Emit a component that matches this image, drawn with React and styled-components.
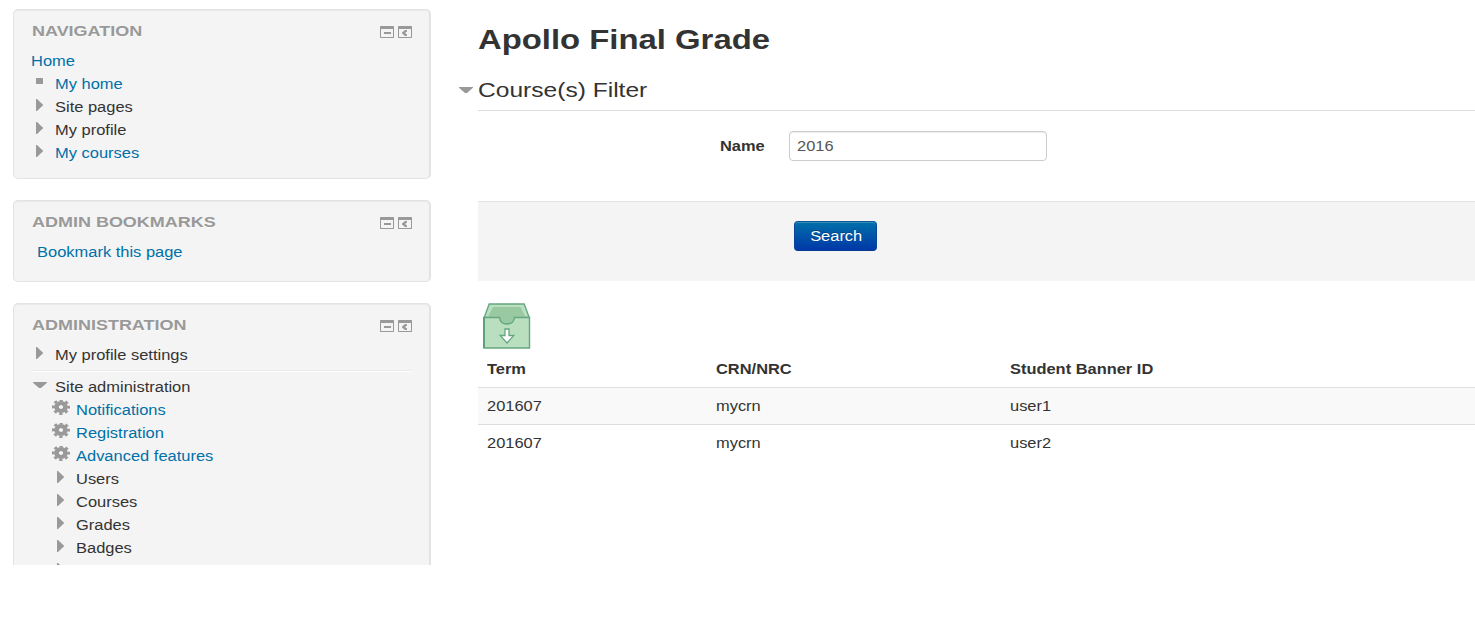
import React from "react";
import styled, { createGlobalStyle } from "styled-components";

const Global = createGlobalStyle`
  * { box-sizing: border-box; }
  body {
    margin: 0;
    background: #fff;
    color: #333;
    font: 14px/20px "Liberation Sans", Arial, sans-serif;
  }
`;

const Page = styled.div`
  display: flex;
  align-items: flex-start;
  width: 100%;
  height: 565px;
  overflow: hidden;
`;

/* Wide lettering used through the whole page */
const Wide = styled.span`
  display: inline-block;
  white-space: nowrap;
  transform: scaleX(${(p) => p.$by || 1.173});
  transform-origin: ${(p) => p.$origin || "left"} center;
`;

const Sidebar = styled.aside`
  flex: none;
  width: 418px;
  margin: 9px 0 0 13px;
  display: flex;
  flex-direction: column;
  gap: 21px;
`;

const Block = styled.section`
  height: ${(p) => p.$height}px;
  padding: 11px 17px 0;
  background: #f4f4f4;
  border: 1px solid #e3e3e3;
  border-right-width: 2px;
  border-radius: 5px;
  box-shadow: inset 0 1px 1px rgba(0, 0, 0, 0.05);
`;

const BlockHeader = styled.header`
  display: flex;
  justify-content: space-between;
  height: 20px;
  margin-bottom: 10px;
  padding-left: 1px;
`;

const BlockTitle = styled.h2`
  margin: 0;
  font-size: 15.4px;
  line-height: 20px;
  font-weight: bold;
  color: #999;
  text-transform: uppercase;
  text-shadow: 0 1px 0 rgba(255, 255, 255, 0.5);
`;

const Actions = styled.div`
  display: flex;
  gap: 4px;
  padding: 5px 0 0;
  svg { display: block; }
`;

const Row = styled.div`
  display: flex;
  height: 20px;
  margin-bottom: 3px;
  padding-left: ${(p) => (p.$level === 2 ? 21 : p.$indent || 0)}px;
  color: ${(p) => (p.$link ? "#0070a8" : "#333")};
`;

const IconCell = styled.span`
  flex: none;
  width: 24px;
  height: 20px;
  svg { display: block; }
`;

const Rule = styled.hr`
  height: 2px;
  margin: 5px 0 5px;
  border: 0;
  border-top: 1px solid #e9e9e9;
  border-bottom: 1px solid #fff;
`;

const Main = styled.main`
  flex: 1;
  min-width: 0;
  padding: 20px 0 0 47px;
`;

const Title = styled.h1`
  margin: 0;
  font-size: 28px;
  line-height: 40px;
  font-weight: bold;
`;

const Legend = styled.div`
  display: flex;
  height: 51px;
  padding-top: 10px;
  border-bottom: 1px solid #ddd;
  font-size: 21px;
  line-height: 40px;
`;

const Toggle = styled.span`
  flex: none;
  width: 19px;
  margin-left: -19px;
  padding-top: 17px;
  svg { display: block; }
`;

const Field = styled.label`
  display: flex;
  align-items: center;
  height: 30px;
  margin: 20px 0 40px 242px;
  font-weight: bold;
`;

const FieldName = styled.span`
  width: 69px;
`;

const Input = styled.span`
  display: block;
  width: 258px;
  height: 30px;
  padding: 4px 7px;
  background: #fff;
  border: 1px solid #ccc;
  border-radius: 4px;
  box-shadow: inset 0 1px 1px rgba(0, 0, 0, 0.075);
  color: #555;
  font-weight: normal;
`;

const ActionBar = styled.div`
  height: 80px;
  padding: 19px 0 0 316px;
  background: #f4f4f4;
  border-top: 1px solid #e3e3e3;
`;

const Button = styled.button`
  display: block;
  width: 83px;
  height: 30px;
  padding: 0 0 0 1px;
  border: 1px solid;
  border-color: #0b5794 #0b4696 #063a8c;
  border-radius: 4px;
  background: linear-gradient(#0070a8, #0038a8);
  box-shadow: inset 0 1px 0 rgba(255, 255, 255, 0.2);
  color: #fff;
  font: inherit;
  text-shadow: 0 -1px 0 rgba(0, 0, 0, 0.25);
`;

const Download = styled.div`
  height: 69px;
  padding: 22px 0 0 5px;
  svg { display: block; }
`;

const TableRow = styled.div`
  display: grid;
  grid-template-columns: 229px 294px 1fr;
  height: 37px;
  padding: ${(p) => (p.$head ? 9 : 8)}px 0 0 9px;
  border-top: ${(p) => (p.$head ? "0" : "1px solid #ddd")};
  background: ${(p) => (p.$odd ? "#f9f9f9" : "#fff")};
  font-weight: ${(p) => (p.$head ? "bold" : "normal")};
`;

const icons = {
  right: (
    <svg width="24" height="20" fill="#999">
      <path d="M5 2h1L12.300 8 6 14H5z" />
    </svg>
  ),
  down: (
    <svg width="24" height="20" fill="#999">
      <path d="M2 5h14v.8L10 11H8L2 5.800z" />
    </svg>
  ),
  square: (
    <svg width="24" height="20" fill="#999">
      <rect x="5" y="4" width="7" height="6" rx="0.5" />
    </svg>
  ),
  gear: (
    <svg width="24" height="20">
      <g transform="translate(9 7) scale(1.13 1)">
        <circle r="4" fill="none" stroke="#999" strokeWidth="4.200" />
        <circle r="6.800" fill="none" stroke="#999" strokeWidth="2.400" strokeDasharray="2.900 2.440" strokeDashoffset="1.450" />
      </g>
    </svg>
  ),
};

const Minimise = () => (
  <svg width="14" height="12" fill="#999">
    <path fillRule="evenodd" d="M0.500 0h13l.5.5v11l-.5.5H.5l-.5-.5V.5zM1 3v8h12V3z" />
    <rect x="4" y="6" width="7" height="2" />
  </svg>
);

const Dock = () => (
  <svg width="14" height="12" fill="#999">
    <path fillRule="evenodd" d="M0.500 0h13l.5.5v11l-.5.5H.5l-.5-.5V.5zM1 3v8h12V3z" />
    <path d="M4 6.500L7 4H9v1.500L7.500 6.500v1L9 8.500V10H7L4 7.500z" />
  </svg>
);

const Inbox = () => (
  <svg width="48" height="46" viewBox="0 0 48 46">
    <path d="M1.200 14.500L6.200 1h35l5 13.500z" fill="#b9dfbf" stroke="#65a780" strokeWidth="1.400" />
    <path d="M5 14L10 4h27.500l5 10-10 4-8 4-8-4z" fill="#98c9a0" />
    <path d="M1 14.500h15.500c.5 4 3.500 6.500 7.500 6.500s7-2.500 7.500-6.500h15V45H1z" fill="#b9dfbf" />
    <path d="M1 14.500h15.500c.5 4 3.500 6.500 7.500 6.500s7-2.500 7.500-6.500h15V45H1z" fill="none" stroke="#65a780" strokeWidth="1.400" />
    <path d="M1 14v31" stroke="#5fa07a" strokeWidth="2" />
    <path d="M22 26h4v6.500h4.800L24 40l-6.800-7.500H22z" fill="#fff" stroke="#65a780" strokeWidth="1.300" />
  </svg>
);

const Item = ({ icon, children, level, link, indent }) => (
  <Row $level={level} $link={link} $indent={indent}>
    {icon && <IconCell>{icons[icon]}</IconCell>}
    <Wide $by={1.176}>{children}</Wide>
  </Row>
);

const Panel = ({ title, height, children }) => (
  <Block $height={height}>
    <BlockHeader>
      <BlockTitle><Wide $by={1.168}>{title}</Wide></BlockTitle>
      <Actions><Minimise /><Dock /></Actions>
    </BlockHeader>
    {children}
  </Block>
);

const rows = [
  ["201607", "mycrn", "user1"],
  ["201607", "mycrn", "user2"],
];

export default function App() {
  return (
    <>
      <Global />
      <Page>
        <Sidebar>
          <Panel title="Navigation" height={170}>
            <Item link>Home</Item>
            <Item icon="square" link>My home</Item>
            <Item icon="right">Site pages</Item>
            <Item icon="right">My profile</Item>
            <Item icon="right" link>My courses</Item>
          </Panel>
          <Panel title="Admin bookmarks" height={82}>
            <Item link indent={6}>Bookmark this page</Item>
          </Panel>
          <Panel title="Administration" height={400}>
            <Item icon="right">My profile settings</Item>
            <Rule />
            <Item icon="down">Site administration</Item>
            <Item icon="gear" level={2} link>Notifications</Item>
            <Item icon="gear" level={2} link>Registration</Item>
            <Item icon="gear" level={2} link>Advanced features</Item>
            <Item icon="right" level={2}>Users</Item>
            <Item icon="right" level={2}>Courses</Item>
            <Item icon="right" level={2}>Grades</Item>
            <Item icon="right" level={2}>Badges</Item>
            <Item icon="right" level={2} />
          </Panel>
        </Sidebar>
        <Main>
          <Title><Wide>Apollo Final Grade</Wide></Title>
          <Legend>
            <Toggle>
              <svg width="14" height="6" fill="#999"><path d="M0 0h14v.8L8 6H6L0 .8z" /></svg>
            </Toggle>
            <Wide $by={1.17}>Course(s) Filter</Wide>
          </Legend>
          <Field>
            <FieldName><Wide>Name</Wide></FieldName>
            <Input><Wide>2016</Wide></Input>
          </Field>
          <ActionBar>
            <Button type="button"><Wide $origin="center">Search</Wide></Button>
          </ActionBar>
          <Download><Inbox /></Download>
          <TableRow $head>
            <Wide>Term</Wide>
            <Wide>CRN/NRC</Wide>
            <Wide>Student Banner ID</Wide>
          </TableRow>
          {rows.map((r, i) => (
            <TableRow key={r[2]} $odd={i % 2 === 0}>
              {r.map((c) => <Wide key={c}>{c}</Wide>)}
            </TableRow>
          ))}
        </Main>
      </Page>
    </>
  );
}
